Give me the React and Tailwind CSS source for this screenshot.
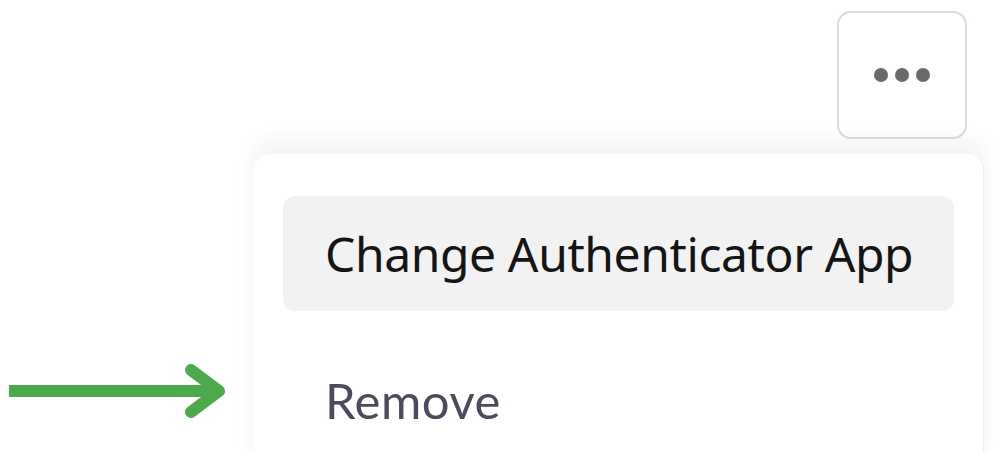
import React from 'react';

const items = [
  { label: 'Change Authenticator App', active: true },
  { label: 'Remove', active: false },
];

function Dots() {
  return (
    <svg width="58" height="16" viewBox="0 0 58 16" className="text-[#6a6a6a]">
      <circle cx="8" cy="8" r="7" fill="currentColor" />
      <circle cx="29" cy="8" r="7" fill="currentColor" />
      <circle cx="50" cy="8" r="7" fill="currentColor" />
    </svg>
  );
}

export default function App() {
  return (
    <div className="relative w-[996px] h-[452px] overflow-hidden bg-white">
      <div className="flex flex-col items-end">
        <button className="mt-[11px] mr-[29px] w-[130px] h-[128px] flex items-center justify-center rounded-[14px] border-2 border-[#d9dae3] bg-white">
          <Dots />
        </button>
        <div className="mt-[15px] mr-[12px] w-[730px] h-[320px] rounded-t-[16px] bg-white border-r border-[#efeff2] shadow-[0_-14px_22px_rgba(0,0,0,0.05)] px-[29px] pt-[42px] flex flex-col gap-[32px]">
          {items.map((it) => (
            <div
              key={it.label}
              className={
                'h-[115px] shrink-0 flex items-center pl-[42px] rounded-[12px] leading-none ' +
                (it.active
                  ? "bg-[#f2f2f2] text-[#151515] text-[48px] tracking-[-0.4px] font-['Noto_Sans',sans-serif]"
                  : "text-[#4a4b5c] text-[49px] tracking-[0.5px] font-['Lato',sans-serif]")
              }
            >
              {it.label}
            </div>
          ))}
        </div>
      </div>

      {/* annotation arrow */}
      <svg className="absolute left-0 top-[360px]" width="240" height="64" viewBox="0 0 240 64">
        <line x1="9" y1="31" x2="214" y2="31" stroke="#4caa4b" strokeWidth="12" />
        <polyline
          points="191,10 219,31 191,52"
          fill="none"
          stroke="#4caa4b"
          strokeWidth="12"
          strokeLinecap="round"
          strokeLinejoin="round"
        />
      </svg>
    </div>
  );
}
